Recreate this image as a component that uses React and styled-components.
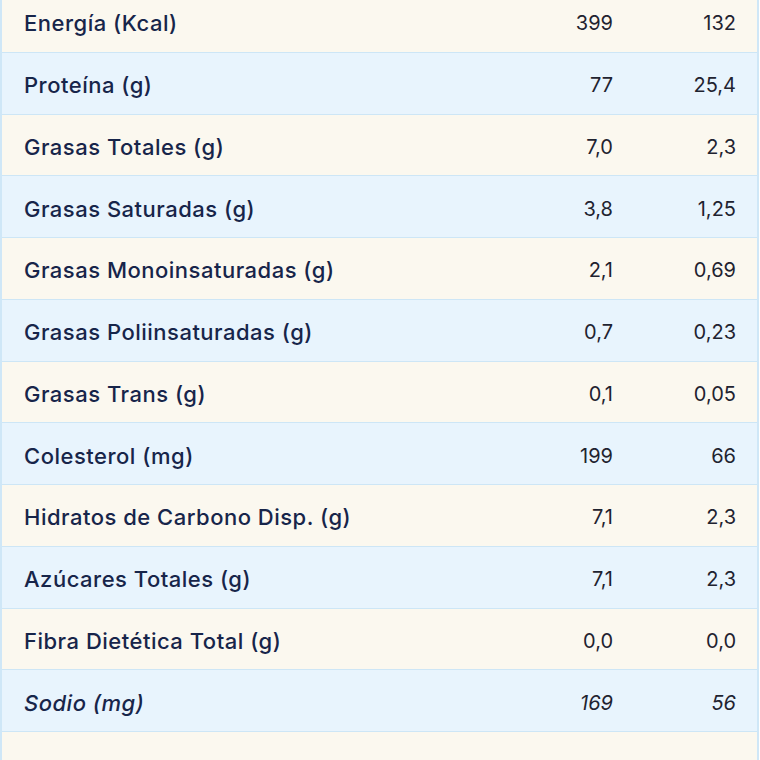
import React from "react";
import styled, { createGlobalStyle } from "styled-components";

const rows = [
  { label: "Energía (Kcal)", per100: "399", portion: "132" },
  { label: "Proteína (g)", per100: "77", portion: "25,4" },
  { label: "Grasas Totales (g)", per100: "7,0", portion: "2,3" },
  { label: "Grasas Saturadas (g)", per100: "3,8", portion: "1,25" },
  { label: "Grasas Monoinsaturadas (g)", per100: "2,1", portion: "0,69" },
  { label: "Grasas Poliinsaturadas (g)", per100: "0,7", portion: "0,23" },
  { label: "Grasas Trans (g)", per100: "0,1", portion: "0,05" },
  { label: "Colesterol (mg)", per100: "199", portion: "66" },
  { label: "Hidratos de Carbono Disp. (g)", per100: "7,1", portion: "2,3" },
  { label: "Azúcares Totales (g)", per100: "7,1", portion: "2,3" },
  { label: "Fibra Dietética Total (g)", per100: "0,0", portion: "0,0" },
  { label: "Sodio (mg)", per100: "169", portion: "56", italic: true },
  { label: "", per100: "", portion: "" },
];

const GlobalStyle = createGlobalStyle`
  html, body {
    margin: 0;
    padding: 0;
    background: #ffffff;
    overflow: hidden;
  }
  body {
    font-family: "Inter", "Noto Sans", sans-serif;
  }
`;

const Table = styled.div`
  width: 759px;
  margin-top: -9px;
  border-left: 2px solid #cfe7f7;
  border-right: 2px solid #cfe7f7;
  box-sizing: border-box;
`;

const Row = styled.div`
  display: grid;
  grid-template-columns: 1fr 120px 144px;
  align-items: center;
  height: 61.75px;
  padding-top: 4px;
  box-sizing: border-box;
  border-bottom: 1px solid #cde6f6;
  background: ${(p) => (p.$alt ? "#e8f4fd" : "#fbf8ef")};
  font-style: ${(p) => (p.$italic ? "italic" : "normal")};
`;

const Label = styled.div`
  padding-left: 22px;
  font-size: 22px;
  font-weight: 500;
  color: #17254a;
  letter-spacing: 0.5px;
`;

const Value = styled.div`
  text-align: right;
  padding-right: ${(p) => (p.$last ? "21px" : "0")};
  font-size: 20px;
  font-weight: 400;
  color: #1f2330;
`;

export default function App() {
  return (
    <>
      <GlobalStyle />
      <Table>
        {rows.map((r, i) => (
          <Row key={i} $alt={i % 2 === 1} $italic={r.italic}>
            <Label>{r.label}</Label>
            <Value>{r.per100}</Value>
            <Value $last>{r.portion}</Value>
          </Row>
        ))}
      </Table>
    </>
  );
}
